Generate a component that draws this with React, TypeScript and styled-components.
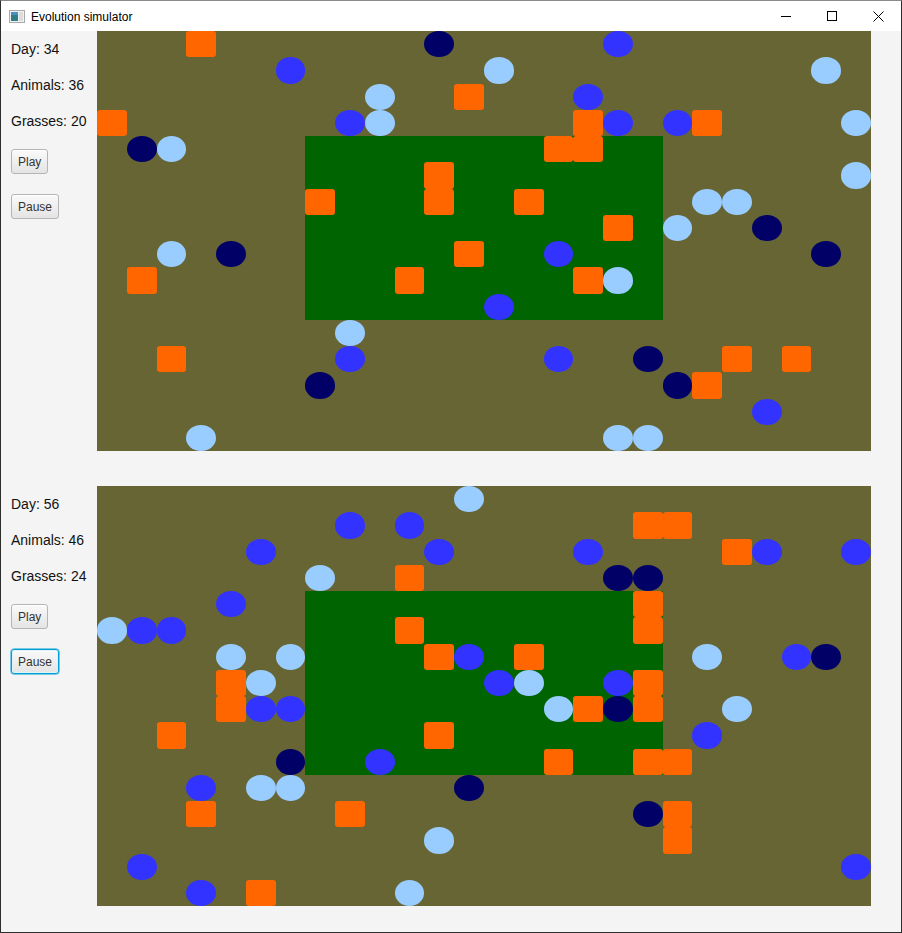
import styled, { createGlobalStyle } from "styled-components"

const GlobalStyle = createGlobalStyle`
  html, body {
    margin: 0;
    padding: 0;
    background: #f4f4f4;
  }
`

const COLS = 26
const ROWS = 16

const Window = styled.div`
  width: 902px;
  height: 933px;
  box-sizing: border-box;
  border: 1px solid #2e2e2e;
  border-top-color: #8a8a8a;
  background: #f4f4f4;
  display: flex;
  flex-direction: column;
  overflow: hidden;
`

const TitleBar = styled.div`
  height: 30px;
  background: #ffffff;
  display: flex;
  align-items: center;
  font-family: "Liberation Sans", Arial, sans-serif;
  font-size: 12px;
  color: #000;
`

const AppIcon = styled.svg`
  margin-left: 8px;
  margin-right: 6px;
`

const Title = styled.span`
  flex: 1;
  padding-top: 1px;
`

const WinButton = styled.div`
  width: 46px;
  height: 30px;
  display: flex;
  align-items: center;
  justify-content: center;
`

const Content = styled.div`
  display: flex;
  flex-direction: column;
  gap: 35px;
`

const SimRow = styled.div`
  display: flex;
  height: 420px;
`

const Sidebar = styled.div`
  width: 96px;
  padding-left: 10px;
  box-sizing: border-box;
  display: flex;
  flex-direction: column;
  align-items: flex-start;
  font-family: "Liberation Sans", Arial, sans-serif;
`

const Stat = styled.div`
  font-size: 14px;
  line-height: 36px;
  height: 36px;
  color: #111;
  white-space: nowrap;
`

const Button = styled.button<{ $focused?: boolean; $gap: number }>`
  margin-top: ${(p) => p.$gap}px;
  height: 25px;
  padding: 0 6px;
  font-family: "Liberation Sans", Arial, sans-serif;
  font-size: 12px;
  color: #333;
  border-radius: 3px;
  border: 1px solid ${(p) => (p.$focused ? "#039ed3" : "#b5b5b5")};
  box-shadow: ${(p) =>
    p.$focused
      ? "inset 0 0 0 1px #dff3fb, 0 0 0 0.5px #039ed3"
      : "inset 0 1px 0 #ffffff"};
  background: linear-gradient(#fafafa, #e4e4e4);
  cursor: default;
`

const Map = styled.div`
  width: 774px;
  height: 420px;
  background: #686535;
  display: grid;
  grid-template-columns: repeat(${COLS}, 1fr);
  grid-template-rows: repeat(${ROWS}, 1fr);
`

const Jungle = styled.div`
  grid-column: 8 / 20;
  grid-row: 5 / 12;
  background: #006400;
`

const Grass = styled.div<{ $c: number; $r: number }>`
  grid-column: ${(p) => p.$c + 1};
  grid-row: ${(p) => p.$r + 1};
  background: #ff6600;
  border-radius: 3px;
`

const Animal = styled.div<{ $c: number; $r: number; $tone: string }>`
  grid-column: ${(p) => p.$c + 1};
  grid-row: ${(p) => p.$r + 1};
  background: ${(p) => p.$tone};
  border-radius: 50%;
`

const TONES: Record<string, string> = {
  l: "#99ccff",
  b: "#3333ff",
  n: "#000066",
}

type Sim = {
  day: number
  animals: number
  grasses: [number, number][]
  beasts: [number, number, string][]
  focusPause?: boolean
}

const sims: Sim[] = [
  {
    day: 34,
    animals: 36,
    grasses: [
      [3, 0], [12, 2], [0, 3], [16, 3], [20, 3], [15, 4], [16, 4], [11, 5],
      [7, 6], [11, 6], [14, 6], [17, 7], [12, 8], [1, 9], [10, 9], [16, 9],
      [2, 12], [21, 12], [23, 12], [20, 13],
    ],
    beasts: [
      [11, 0, "n"], [17, 0, "b"], [6, 1, "b"], [13, 1, "l"], [24, 1, "l"],
      [9, 2, "l"], [16, 2, "b"], [8, 3, "b"], [9, 3, "l"], [17, 3, "b"],
      [19, 3, "b"], [25, 3, "l"], [1, 4, "n"], [2, 4, "l"], [25, 5, "l"],
      [20, 6, "l"], [21, 6, "l"], [19, 7, "l"], [22, 7, "n"], [2, 8, "l"],
      [4, 8, "n"], [15, 8, "b"], [24, 8, "n"], [17, 9, "l"], [13, 10, "b"],
      [8, 11, "l"], [8, 12, "b"], [15, 12, "b"], [18, 12, "n"], [7, 13, "n"],
      [19, 13, "n"], [22, 14, "b"], [3, 15, "l"], [17, 15, "l"], [18, 15, "l"],
    ],
  },
  {
    day: 56,
    animals: 46,
    focusPause: true,
    grasses: [
      [18, 1], [19, 1], [21, 2], [10, 3], [18, 4], [10, 5], [18, 5], [11, 6],
      [14, 6], [4, 7], [18, 7], [4, 8], [16, 8], [18, 8], [2, 9], [11, 9],
      [15, 10], [18, 10], [19, 10], [3, 12], [8, 12], [19, 12], [19, 13], [5, 15],
    ],
    beasts: [
      [12, 0, "l"], [8, 1, "b"], [10, 1, "b"], [5, 2, "b"], [11, 2, "b"],
      [16, 2, "b"], [22, 2, "b"], [25, 2, "b"], [7, 3, "l"], [17, 3, "n"],
      [18, 3, "n"], [4, 4, "b"], [0, 5, "l"], [1, 5, "b"], [2, 5, "b"],
      [4, 6, "l"], [6, 6, "l"], [12, 6, "b"], [20, 6, "l"], [23, 6, "b"],
      [24, 6, "n"], [5, 7, "l"], [13, 7, "b"], [14, 7, "l"], [17, 7, "b"],
      [5, 8, "b"], [6, 8, "b"], [15, 8, "l"], [17, 8, "n"], [21, 8, "l"],
      [20, 9, "b"], [6, 10, "n"], [9, 10, "b"], [3, 11, "b"], [5, 11, "l"],
      [6, 11, "l"], [12, 11, "n"], [18, 12, "n"], [11, 13, "l"], [1, 14, "b"],
      [25, 14, "b"], [3, 15, "b"], [10, 15, "l"],
    ],
  },
]

function SimulationPanel({ sim }: { sim: Sim }) {
  return (
    <SimRow>
      <Sidebar>
        <Stat>Day: {sim.day}</Stat>
        <Stat>Animals: {sim.animals}</Stat>
        <Stat>Grasses: {sim.grasses.length}</Stat>
        <Button $gap={10}>Play</Button>
        <Button $gap={20} $focused={sim.focusPause}>Pause</Button>
      </Sidebar>
      <Map>
        <Jungle />
        {sim.grasses.map(([c, r]) => (
          <Grass key={"g" + c + "-" + r} $c={c} $r={r} />
        ))}
        {sim.beasts.map(([c, r, t]) => (
          <Animal key={"a" + c + "-" + r} $c={c} $r={r} $tone={TONES[t]} />
        ))}
      </Map>
    </SimRow>
  )
}

export default function App() {
  return (
    <>
      <GlobalStyle />
      <Window>
        <TitleBar>
          <AppIcon width="16" height="13" viewBox="0 0 16 13">
            <rect x="0.5" y="0.5" width="15" height="12" fill="#f2f2f2" stroke="#a9a9a9" />
            <rect x="2" y="2" width="7" height="9" fill="#2f7d86" />
            <rect x="2" y="2" width="7" height="3" fill="#4a8fc2" />
            <rect x="10" y="2" width="4" height="9" fill="#dcdcdc" />
          </AppIcon>
          <Title>Evolution simulator</Title>
          <WinButton>
            <svg width="10" height="10" viewBox="0 0 10 10">
              <path d="M0 5.5h10" stroke="#000" strokeWidth="1" />
            </svg>
          </WinButton>
          <WinButton>
            <svg width="10" height="10" viewBox="0 0 10 10">
              <rect x="0.5" y="0.5" width="9" height="9" fill="none" stroke="#000" />
            </svg>
          </WinButton>
          <WinButton>
            <svg width="11" height="11" viewBox="0 0 11 11">
              <path d="M0.5 0.5l10 10M10.5 0.5l-10 10" stroke="#000" strokeWidth="1" />
            </svg>
          </WinButton>
        </TitleBar>
        <Content>
          {sims.map((s) => (
            <SimulationPanel key={s.day} sim={s} />
          ))}
        </Content>
      </Window>
    </>
  )
}
